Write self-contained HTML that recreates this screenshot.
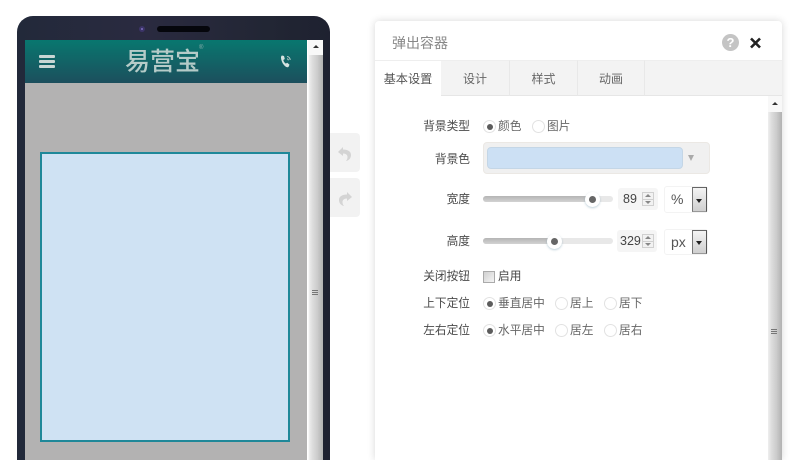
<!DOCTYPE html>
<html>
<head>
<meta charset="utf-8">
<style>
*{box-sizing:border-box;margin:0;padding:0}
html,body{width:800px;height:460px;overflow:hidden;background:#fff}
body{position:relative;font-family:"Liberation Sans","Noto Sans CJK SC",sans-serif;font-size:11.7px;color:#666}
.a{position:absolute}
.t{position:absolute;white-space:nowrap;line-height:16px;height:16px;margin-top:1px}
.l{position:absolute;white-space:nowrap;line-height:16px;height:16px;right:330px;color:#4a4a4a;margin-top:1px}
.r{position:absolute;width:13px;height:13px;border-radius:50%;background:#fff;border:1px solid #e2e2e2;margin-top:1px}
.r.on:after{content:"";position:absolute;left:2.500px;top:2.500px;width:6px;height:6px;border-radius:50%;background:#5c5c5c}
.track{position:absolute;left:483px;width:130px;height:6px;border-radius:3px;background:#e8e8e8}
.fill{position:absolute;left:0;top:0;height:6px;border-radius:3px;background:linear-gradient(#b4b4b4,#d2d2d2)}
.knob{position:absolute;width:15px;height:15px;border-radius:50%;background:#fff;box-shadow:0 1px 2px rgba(110,150,170,.45)}
.knob:after{content:"";position:absolute;left:4px;top:4px;width:7px;height:7px;border-radius:50%;background:#666}
.num{position:absolute;background:#f5f5f5;border-radius:3px;height:22px;width:40px;left:618px;line-height:22px;color:#444;font-size:12.5px}
.spin{position:absolute;left:642px;width:12px;height:14px;background:#f2f2f2;border:1px solid #d0d0d0}
.spin:before{content:"";position:absolute;left:2px;top:1px;border:3px solid transparent;border-top:0;border-bottom:3px solid #888}
.spin:after{content:"";position:absolute;left:2px;top:8px;border:3px solid transparent;border-bottom:0;border-top:3px solid #888}
.spin i{position:absolute;left:0;right:0;top:6px;height:1px;background:#d0d0d0}
.unit{position:absolute;left:664px;width:44px;background:#fff;border:1px solid #f3f3f3;border-radius:3px;color:#555;font-size:14px}
.drop{position:absolute;left:692px;width:15px;background:linear-gradient(#f4f4f4,#cfcfcf);border-left:1px solid #777;border-top:1px solid #666;border-bottom:1px solid #999;border-right:1px solid #555}
.drop:after{content:"";position:absolute;left:3px;top:50%;margin-top:-1px;border:3px solid transparent;border-bottom:0;border-top:4px solid #222}
.tab{position:absolute;top:60px;height:36px;background:#f3f3f3;border-right:1px solid #e8e8e8;border-bottom:1px solid #e6e6e6;border-top:1px solid #eee;text-align:center;line-height:37px;color:#666;font-size:12px}
.sb{background:linear-gradient(90deg,#eee,#ddd 25%,#ccc 60%,#b4b4b4 95%)}
</style>
</head>
<body>
<!-- phone -->
<div class="a" style="left:17px;top:16px;width:313px;height:444px;border-radius:16px 16px 0 0;background:linear-gradient(90deg,#22293a,#2a2a40 40%,#222634 80%,#1e2130)"></div>
<div class="a" style="left:139px;top:26px;width:6px;height:6px;border-radius:50%;background:#3c3468"></div>
<div class="a" style="left:141px;top:28px;width:2px;height:2px;border-radius:50%;background:#7f6fc0"></div>
<div class="a" style="left:157px;top:26px;width:53px;height:6px;border-radius:3px;background:#05060c"></div>
<div class="a" style="left:25px;top:40px;width:282px;height:43px;background:linear-gradient(#08776f,#1c4f5d)"></div>
<div class="a" style="left:25px;top:83px;width:282px;height:377px;background:#b3b2b2"></div>
<div class="a" style="left:39px;top:55px;width:16px;height:3px;background:#c8d6d4;box-shadow:0 5px 0 #c8d6d4,0 10px 0 #c8d6d4;border-radius:1px"></div>
<div class="t" style="left:125px;top:46px;width:80px;height:28px;line-height:28px;font-size:25px;color:#b5cbc8;font-family:'Noto Sans CJK SC','Liberation Sans',sans-serif;font-weight:500;margin-top:0">易营宝</div>
<div class="t" style="left:199px;top:44px;font-size:6px;line-height:8px;height:8px;color:#8fb0ad;margin-top:0">®</div>
<svg class="a" style="left:279px;top:54px" width="14" height="15" viewBox="0 0 14 15"><path d="M3 1.500l2 .5.8 3-1.500 1c.4 1.600 1.200 2.800 2.500 3.600l1.400-.9 2.300 1.900-.8 2c-.5.7-1.500.8-2.400.4C4.600 11.500 2.500 8 2 4c-.1-1.200.2-2 1-2.500z" fill="#d5e2e0"/><path d="M8 2.500c1.600.2 3 1.500 3.200 3.500M8 4.800c.8.100 1.300.7 1.400 1.500" stroke="#b5cbc8" fill="none" stroke-width="1"/></svg>
<div class="a" style="left:40px;top:152px;width:250px;height:290px;background:#cfe2f3;border:2px solid #1f8899"></div>
<div class="a" style="left:307px;top:40px;width:16px;height:420px;background:#f8f8f8;border-left:1px solid #fff"></div>
<div class="a" style="left:313px;top:45px;border:3px solid transparent;border-top:0;border-bottom:3px solid #333"></div>
<div class="a sb" style="left:309px;top:55px;width:14px;height:405px"></div>
<div class="a" style="left:312px;top:290px;width:6px;height:1px;background:#777;box-shadow:0 2px 0 #777,0 4px 0 #777"></div>
<!-- undo / redo -->
<div class="a" style="left:330px;top:133px;width:30px;height:39px;background:#f2f2f2;border-radius:0 4px 4px 0"></div>
<div class="a" style="left:330px;top:178px;width:30px;height:39px;background:#f2f2f2;border-radius:0 4px 4px 0"></div>
<svg class="a" style="left:336px;top:145px" width="18" height="18" viewBox="0 0 18 18"><path d="M7 2L2 7l5 4V8.500c3 0 4.500 1.500 4.500 3.500 0 1.500-.6 3-1.500 4 3-.5 5-3 5-6 0-3.500-3-5.500-8-5.500z" fill="#d4d4d4"/></svg>
<svg class="a" style="left:336px;top:190px" width="18" height="18" viewBox="0 0 18 18"><path d="M11 2l5 5-5 4V8.500c-3 0-4.500 1.500-4.500 3.500 0 1.500.6 3 1.500 4-3-.5-5-3-5-6 0-3.500 3-5.500 8-5.500z" fill="#d4d4d4"/></svg>
<!-- panel -->
<div class="a" style="left:375px;top:21px;width:407px;height:439px;background:#fff;border-radius:4px 4px 0 0;box-shadow:0 0 8px rgba(0,0,0,.16)"></div>
<div class="t" style="left:392px;top:35px;font-size:14px;color:#888;margin-top:0">弹出容器</div>
<div class="a" style="left:722px;top:34px;width:17px;height:17px;border-radius:50%;background:#c4c4c4;color:#fff;font-weight:700;font-size:13px;line-height:17px;text-align:center">?</div>
<svg class="a" style="left:749px;top:37px" width="13" height="12" viewBox="0 0 13 12"><path d="M2 1.500l9 9M11 1.500l-9 9" stroke="#222" stroke-width="2.600"/></svg>
<div class="a" style="left:441px;top:60px;width:341px;height:36px;background:#f3f3f3;border-top:1px solid #eee;border-bottom:1px solid #e6e6e6"></div>
<div class="a" style="left:375px;top:60px;width:66px;height:36px;background:#fff;border-top:1px solid #eee;text-align:center;line-height:37px;color:#555;font-size:12.2px">基本设置</div>
<div class="tab" style="left:441px;width:69px">设计</div>
<div class="tab" style="left:510px;width:68px">样式</div>
<div class="tab" style="left:578px;width:67px">动画</div>
<!-- panel scrollbar -->
<div class="a" style="left:768px;top:96px;width:14px;height:364px;background:#f8f8f8"></div>
<div class="a" style="left:772px;top:102px;border:3px solid transparent;border-top:0;border-bottom:3px solid #333"></div>
<div class="a sb" style="left:768px;top:112px;width:14px;height:348px"></div>
<div class="a" style="left:771px;top:329px;width:6px;height:1px;background:#777;box-shadow:0 2px 0 #777,0 4px 0 #777"></div>
<!-- rows -->
<div class="l" style="top:118px">背景类型</div>
<div class="r on" style="left:483px;top:119px"></div><div class="t" style="left:498px;top:118px">颜色</div>
<div class="r" style="left:532px;top:119px"></div><div class="t" style="left:547px;top:118px">图片</div>

<div class="l" style="top:151px">背景色</div>
<div class="a" style="left:483px;top:142px;width:227px;height:32px;background:#f0f0f0;border:1px solid #ebe8e4;border-radius:4px"></div>
<div class="a" style="left:487px;top:147px;width:196px;height:22px;background:#cce0f4;border:1px solid #c4d6e6;border-radius:4px"></div>
<div class="a" style="left:688px;top:155px;border:3px solid transparent;border-bottom:0;border-top:6px solid #aaa"></div>

<div class="l" style="top:191px">宽度</div>
<div class="track" style="top:196px"><div class="fill" style="width:110px"></div></div>
<div class="knob" style="left:585px;top:192px"></div>
<div class="num" style="top:188px;padding-left:5px">89</div>
<div class="spin" style="top:192px"><i></i></div>
<div class="unit" style="top:186px;height:27px;line-height:25px;padding-left:6px">%</div>
<div class="drop" style="top:187px;height:25px"></div>

<div class="l" style="top:233px">高度</div>
<div class="track" style="top:238px"><div class="fill" style="width:72px"></div></div>
<div class="knob" style="left:547px;top:234px"></div>
<div class="num" style="top:230px;left:617px;padding-left:3px">329</div>
<div class="spin" style="top:234px"><i></i></div>
<div class="unit" style="top:229px;height:26px;line-height:24px;padding-left:6px">px</div>
<div class="drop" style="top:230px;height:24px"></div>

<div class="l" style="top:268px">关闭按钮</div>
<div class="a" style="left:483px;top:271px;width:12px;height:12px;background:linear-gradient(135deg,#d0d0d0,#f4f4f4);border:1px solid #aaa"></div>
<div class="t" style="left:498px;top:268px;color:#444">启用</div>

<div class="l" style="top:295px">上下定位</div>
<div class="r on" style="left:483px;top:296px"></div><div class="t" style="left:498px;top:295px">垂直居中</div>
<div class="r" style="left:555px;top:296px"></div><div class="t" style="left:570px;top:295px">居上</div>
<div class="r" style="left:604px;top:296px"></div><div class="t" style="left:619px;top:295px">居下</div>

<div class="l" style="top:322px">左右定位</div>
<div class="r on" style="left:483px;top:323px"></div><div class="t" style="left:498px;top:322px">水平居中</div>
<div class="r" style="left:555px;top:323px"></div><div class="t" style="left:570px;top:322px">居左</div>
<div class="r" style="left:604px;top:323px"></div><div class="t" style="left:619px;top:322px">居右</div>
</body>
</html>
